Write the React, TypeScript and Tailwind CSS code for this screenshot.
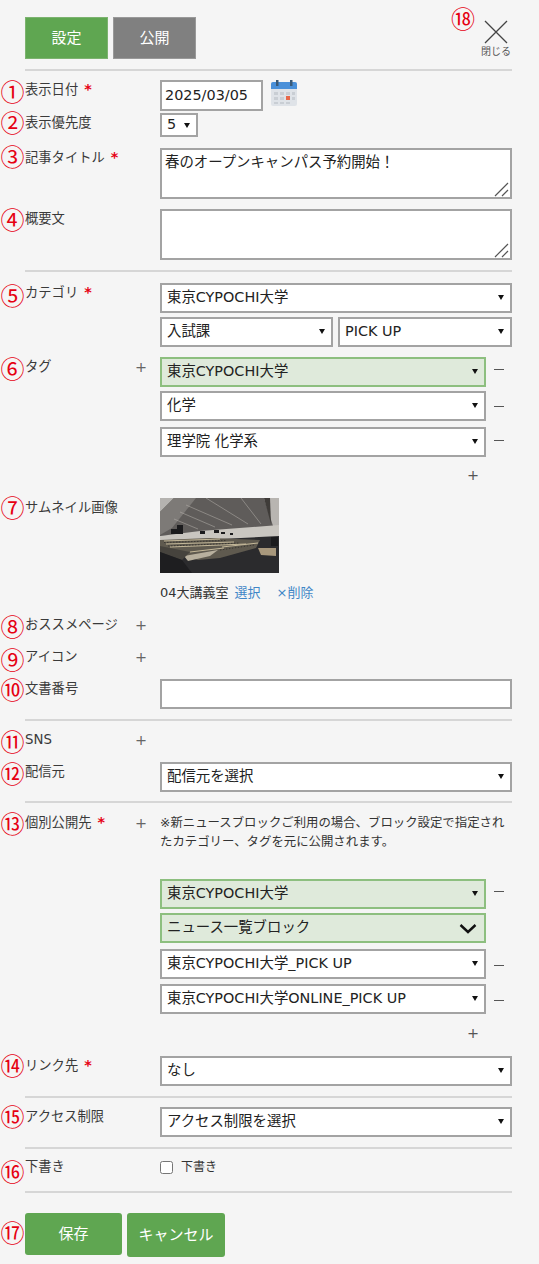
import { ReactNode } from "react"

const font = { fontFamily: '"DejaVu Sans", "Noto Sans CJK JP", sans-serif' }
const numFont = { fontFamily: '"Noto Sans CJK JP", sans-serif' }

function Num({ children, className = "" }: { children: ReactNode; className?: string }) {
  return (
    <span style={numFont} className={`absolute left-[-25px] w-[25px] text-center text-[24px] leading-[24px] text-[#e60012] ${className}`}>
      {children}
    </span>
  )
}

function Label({ n, text, req, plus, numClass = "top-[-1px]" }: { n: string; text: string; req?: boolean; plus?: boolean; numClass?: string }) {
  return (
    <div className="relative flex h-[20px] w-[135px] shrink-0 items-center text-[13.3px] text-[#3a3a3a]">
      <Num className={numClass}>{n}</Num>
      <span className="whitespace-nowrap">{text}</span>
      {req && <span className="ml-[6px] text-[14.4px] font-bold text-[#e60012]">*</span>}
      {plus && <span className="absolute left-[110px] top-[-1px] text-[14.4px] leading-[22px] text-[#666]">+</span>}
    </div>
  )
}

function Select({ value, className = "", green, chevron, small }: { value: string; className?: string; green?: boolean; chevron?: boolean; small?: boolean }) {
  return (
    <div
      className={`relative flex items-center border-2 px-[5px] text-[14.4px] text-[#222] ${small ? "h-[24px]" : "h-[30px]"} ${
        green ? "border-[#8dbf7f] bg-[#dfeadb]" : "border-[#a3a3a3] bg-white"
      } ${className}`}
    >
      <span className="whitespace-nowrap">{value}</span>
      {chevron ? (
        <svg className="absolute right-[7px] top-[8px]" width="18" height="11" viewBox="0 0 18 11" fill="none">
          <path d="M1.5 2 9 9l7.5-7" stroke="#111" strokeWidth="2.4" />
        </svg>
      ) : (
        <span className={`absolute right-[6px] h-0 w-0 border-x-[3px] border-t-[5px] border-x-transparent border-t-[#111] ${small ? "top-[8px]" : "top-[10px]"}`} />
      )}
    </div>
  )
}

function Minus({ className = "" }: { className?: string }) {
  return <span className={`ml-[8px] h-[1px] w-[10px] bg-[#555] ${className}`} />
}

function PlusRow({ className = "" }: { className?: string }) {
  return (
    <div className={`flex justify-end pr-[33px] text-[14.4px] leading-[22px] text-[#555] ${className}`}>+</div>
  )
}

function Grip() {
  return (
    <svg className="absolute bottom-0 right-0" width="16" height="16" viewBox="0 0 16 16" fill="none">
      <path d="M1 15 14 2M8 15l6-6" stroke="#555" strokeWidth="1.2" />
    </svg>
  )
}

function Line({ className = "" }: { className?: string }) {
  return <div className={`h-[2px] bg-[#d6d6d6] ${className}`} />
}

function CalendarIcon() {
  return (
    <svg width="26" height="26" viewBox="0 0 26 26" className="ml-[8px]">
      <rect x="0" y="2" width="26" height="24" rx="2" fill="#dfe3e8" />
      <path d="M0 4a2 2 0 0 1 2-2h22a2 2 0 0 1 2 2v5H0z" fill="#4a90d9" />
      <rect x="5" y="0" width="2.5" height="6" fill="#3a5a78" />
      <rect x="19" y="0" width="2.5" height="6" fill="#3a5a78" />
      <g fill="#c9ced4">
        <rect x="3" y="12" width="4" height="3" />
        <rect x="9" y="12" width="4" height="3" />
        <rect x="15" y="12" width="4" height="3" />
        <rect x="21" y="12" width="3" height="3" />
        <rect x="3" y="17" width="4" height="3" />
        <rect x="9" y="17" width="4" height="3" />
        <rect x="21" y="17" width="3" height="3" />
        <rect x="3" y="22" width="4" height="2" />
        <rect x="9" y="22" width="4" height="2" />
        <rect x="15" y="22" width="4" height="2" />
      </g>
      <rect x="15" y="16" width="4" height="4" fill="#e8684a" />
    </svg>
  )
}

function Thumb() {
  return (
    <svg width="119" height="75" viewBox="0 0 119 75" className="block">
      <rect width="119" height="75" fill="#2b2b2d" />
      {/* ceiling */}
      <path d="M0 0h119v29L0 38z" fill="#5f5c5a" />
      <path d="M0 0h14L0 14z" fill="#b5b3b0" />
      <path d="M0 14 14 0h22L12 30 0 37z" fill="#7d7a77" />
      <path d="M104 0h15v34l-5-3z" fill="#b8b5b1" />
      <path d="M104 0h6l1 26z" fill="#3f3c39" />
      <g stroke="#b9b5af" strokeWidth="0.5" fill="none">
        <path d="M46 0 88 26" />
        <path d="M81 0 101 26" />
        <path d="M26 7 72 27" />
        <path d="M20 14 55 29" />
        <path d="M14 21 38 31" />
      </g>
      {/* back wall */}
      <path d="M0 38 40 33 119 27v11L0 44z" fill="#c9c6c0" />
      <g fill="#1b1b1d">
        <rect x="11" y="31" width="6" height="5" />
        <rect x="17" y="27" width="6" height="9" />
        <rect x="40" y="33" width="5" height="3" />
        <rect x="54" y="32" width="5" height="3" />
        <rect x="61" y="34" width="4" height="2" />
        <rect x="70" y="35" width="3" height="2" />
        <rect x="111" y="39" width="7" height="9" />
      </g>
      {/* seats and desks */}
      <path d="M0 42 50 40 100 42 96 50 60 60 38 62 0 50z" fill="#5f5a4f" />
      <g stroke="#c4b899" strokeWidth="1" fill="none">
        <path d="M4 43 60 41" />
        <path d="M6 46 74 44" />
        <path d="M10 49 86 46" />
        <path d="M30 54 64 50" />
        <path d="M62 49 98 45" />
      </g>
      <g stroke="#23211f" strokeWidth="0.6" strokeDasharray="1.5 1.5" fill="none">
        <path d="M4 44.5 66 42.5" />
        <path d="M8 48 80 45" />
        <path d="M60 52 94 47" />
      </g>
      <path d="M24 58 58 52 50 58 28 63z" fill="#b8b09e" />
      <path d="M0 48 30 54 22 62 0 54z" fill="#46433d" />
      <path d="M98 50h18v8l-15-1z" fill="#a8987c" />
      <path d="M0 54l22 8 10 13H0z" fill="#1e1e20" />
    </svg>
  )
}

export default function App() {
  return (
    <div className="relative min-h-[1264px] bg-[#f5f5f5] pl-[25px] pr-[27px] pt-[17px]" style={font}>
      {/* header */}
      <div className="relative flex h-[42px] gap-[5px]">
        <button className="h-[42px] w-[83px] border border-[#7cb36f] bg-[#5fa651] text-[15px] text-white">設定</button>
        <button className="h-[42px] w-[83px] border border-[#999] bg-[#808080] text-[15px] text-white">公開</button>
        <span style={numFont} className="absolute right-[37px] top-[-11px] text-[24px] leading-[24px] text-[#e60012]">⑱</span>
        <div className="absolute right-0 top-[3px] flex w-[32px] flex-col items-center">
          <svg width="24" height="24" viewBox="0 0 24 24" fill="none">
            <path d="M1 1 23 23M23 1 1 23" stroke="#444" strokeWidth="1.3" />
          </svg>
          <span className="mt-[2px] whitespace-nowrap text-[10px] leading-[12px] text-[#555]">閉じる</span>
        </div>
      </div>
      <Line className="mt-[10px]" />

      <div className="mt-[9px] flex">
        <Label n="①" text="表示日付" req />
        <div className="flex items-start">
          <div className="flex h-[31px] w-[103px] items-center border-2 border-[#a3a3a3] bg-white px-[3px] text-[14.4px] text-[#222]">2025/03/05</div>
          <CalendarIcon />
        </div>
      </div>

      <div className="mt-[2px] flex">
        <Label n="②" text="表示優先度" numClass="top-[-3px]" />
        <Select value="5" small className="w-[38px]" />
      </div>

      <div className="mt-[11px] flex">
        <Label n="③" text="記事タイトル" req numClass="top-[-4px]" />
        <div className="relative h-[51px] flex-1 border-2 border-[#a3a3a3] bg-white px-[3px] py-[2px] text-[14.4px] leading-[20px] text-[#222]">
          春のオープンキャンパス予約開始！
          <Grip />
        </div>
      </div>

      <div className="mt-[10px] flex">
        <Label n="④" text="概要文" numClass="top-[-2px]" />
        <div className="relative h-[51px] flex-1 border-2 border-[#a3a3a3] bg-white">
          <Grip />
        </div>
      </div>

      <Line className="mt-[10px]" />

      <div className="mt-[11px] flex">
        <Label n="⑤" text="カテゴリ" req numClass="top-0" />
        <div className="flex flex-1 flex-col gap-[4px]">
          <Select value="東京CYPOCHI大学" />
          <div className="flex gap-[5px]">
            <Select value="入試課" className="w-[173px]" />
            <Select value="PICK UP" className="flex-1" />
          </div>
        </div>
      </div>

      <div className="mt-[10px] flex">
        <Label n="⑥" text="タグ" plus />
        <div className="flex flex-1 flex-col">
          <div className="flex items-center">
            <Select value="東京CYPOCHI大学" green className="w-[326px]" />
            <Minus className="mt-[-5px]" />
          </div>
          <div className="mt-[4px] flex items-center">
            <Select value="化学" className="w-[326px]" />
            <Minus />
          </div>
          <div className="mt-[6px] flex items-center">
            <Select value="理学院 化学系" className="w-[326px]" />
            <Minus className="mt-[-3px]" />
          </div>
          <PlusRow className="mt-[7px]" />
        </div>
      </div>

      <div className="mt-[12px] flex">
        <Label n="⑦" text="サムネイル画像" numClass="top-[-3px]" />
        <div>
          <Thumb />
          <div className="mt-[11px] flex text-[13px] leading-[18px] text-[#333]">
            <span>04大講義室</span>
            <span className="ml-[6px] text-[#3f86c7]">選択</span>
            <span className="ml-[16px] text-[#3f86c7]">×削除</span>
          </div>
        </div>
      </div>

      <div className="mt-[13px]"><Label n="⑧" text="おススメページ" plus /></div>
      <div className="mt-[12px]"><Label n="⑨" text="アイコン" plus numClass="top-0" /></div>

      <div className="mt-[12px] flex">
        <Label n="⑩" text="文書番号" numClass="top-[-2px]" />
        <div className="h-[30px] flex-1 border-2 border-[#a3a3a3] bg-white" />
      </div>

      <Line className="mt-[10px]" />

      <div className="mt-[9px]"><Label n="⑪" text="SNS" plus /></div>

      <div className="mt-[12px] flex">
        <Label n="⑫" text="配信元" />
        <Select value="配信元を選択" className="flex-1" />
      </div>

      <Line className="mt-[9px]" />

      <div className="mt-[10px] flex">
        <Label n="⑬" text="個別公開先" req plus numClass="top-[-2px]" />
        <div className="flex-1">
          <p className="text-[12.4px] leading-[19px] text-[#333]">※新ニュースブロックご利用の場合、ブロック設定で指定されたカテゴリー、タグを元に公開されます。</p>
          <div className="mt-[28px] flex items-center">
            <Select value="東京CYPOCHI大学" green className="w-[326px]" />
            <Minus className="mt-[-5px]" />
          </div>
          <Select value="ニュース一覧ブロック" green chevron className="mt-[4px] w-[326px]" />
          <div className="mt-[6px] flex items-center">
            <Select value="東京CYPOCHI大学_PICK UP" className="w-[326px]" />
            <Minus className="mt-[2px]" />
          </div>
          <div className="mt-[5px] flex items-center">
            <Select value="東京CYPOCHI大学ONLINE_PICK UP" className="w-[326px]" />
            <Minus className="mt-[2px]" />
          </div>
          <PlusRow className="mt-[8px]" />
        </div>
      </div>

      <div className="mt-[12px] flex">
        <Label n="⑭" text="リンク先" req numClass="top-[-3px]" />
        <Select value="なし" className="flex-1" />
      </div>

      <Line className="mt-[10px]" />

      <div className="mt-[9px] flex">
        <Label n="⑮" text="アクセス制限" numClass="top-[-3px]" />
        <Select value="アクセス制限を選択" className="flex-1" />
      </div>

      <Line className="mt-[10px]" />

      <div className="mt-[8px] flex">
        <Label n="⑯" text="下書き" numClass="top-[2px]" />
        <label className="flex h-[20px] items-center text-[12px] text-[#333]">
          <input type="checkbox" className="h-[13px] w-[13px]" />
          <span className="ml-[8px]">下書き</span>
        </label>
      </div>

      <Line className="mt-[14px]" />

      <div className="relative mt-[20px] flex gap-[5px]">
        <Num className="top-[7px]">⑰</Num>
        <button className="h-[42px] w-[97px] rounded-[3px] bg-[#5fa651] text-[15px] text-white">保存</button>
        <button className="h-[44px] w-[98px] rounded-[3px] bg-[#5fa651] text-[15px] text-white">キャンセル</button>
      </div>
    </div>
  )
}
